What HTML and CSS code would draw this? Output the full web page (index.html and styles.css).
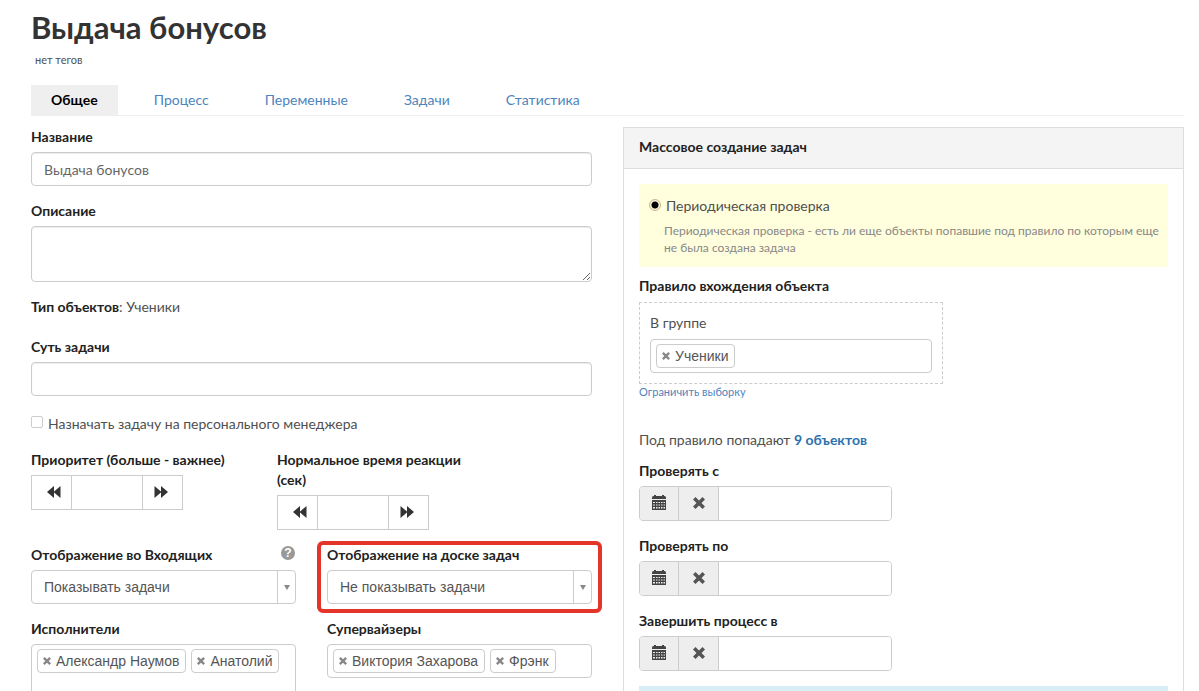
FILE: index.html
```html
<!DOCTYPE html>
<html lang="ru">
<head>
<meta charset="utf-8">
<title>Выдача бонусов</title>
<link rel="stylesheet" href="styles.css">
</head>
<body>
<svg class="sprite" aria-hidden="true">
  <symbol id="backward" viewBox="0 0 14 12"><path d="M7 0v12L0 6zM13.500 0v12L6.500 6z"/></symbol>
  <symbol id="forward" viewBox="0 0 14 12"><path d="M.5 0v12l7-6zM7 0v12l7-6z"/></symbol>
  <symbol id="calendar" viewBox="0 0 14 15"><path d="M0 4V2.500Q0 1 1.500 1H2V0h2v1h6V0h2v1h.5Q14 1 14 2.500V4z"/><path fill-rule="evenodd" d="M0 5h14v10H0zM1 7v1h2V7zm3 0v1h1.500V7zm2.500 0v1H8V7zM9 7v1h1.500V7zm2.500 0v1H13V7zM1 9.500v1h2v-1zm3 0v1h1.500v-1zm2.500 0v1H8v-1zm2.500 0v1h1.500v-1zm2.500 0v1H13v-1zM1 12v1.500h2V12zm3 0v1.500h1.500V12zm2.500 0v1.500H8V12zM9 12v1.500h1.500V12zm2.500 0v1.500H13V12z"/></symbol>
  <symbol id="remove" viewBox="0 0 12 12"><path d="M2.500 0L6 3.500 9.500 0 12 2.500 8.500 6 12 9.500 9.500 12 6 8.500 2.500 12 0 9.500 3.500 6 0 2.500z"/></symbol>
</svg>

<header class="page-head">
  <h1 class="title">Выдача бонусов</h1>
  <p class="tags-note">нет тегов</p>
  <nav class="tabs">
    <a class="tab tab-active" href="#general">Общее</a>
    <a class="tab" href="#process">Процесс</a>
    <a class="tab" href="#variables">Переменные</a>
    <a class="tab" href="#tasks">Задачи</a>
    <a class="tab" href="#stats">Статистика</a>
  </nav>
</header>

<main class="columns" id="general">
  <form class="form">
    <div class="field">
      <label class="label" for="name">Название</label>
      <input class="control" id="name" type="text" value="Выдача бонусов">
    </div>
    <div class="field">
      <label class="label" for="descr">Описание</label>
      <textarea class="control area" id="descr"></textarea>
    </div>
    <p class="object-type"><b>Тип объектов</b>: Ученики</p>
    <div class="field">
      <label class="label" for="essence">Суть задачи</label>
      <input class="control" id="essence" type="text">
    </div>
    <label class="check"><input class="checkbox" type="checkbox">Назначать задачу на персонального менеджера</label>

    <div class="spinners">
      <div class="spinner-field">
        <label class="label" for="priority">Приоритет (больше - важнее)</label>
        <div class="spinner">
          <button class="spin-btn" type="button" aria-label="Меньше"><svg class="spin-icon"><use href="#backward"/></svg></button>
          <input class="spin-input" id="priority" type="text">
          <button class="spin-btn" type="button" aria-label="Больше"><svg class="spin-icon"><use href="#forward"/></svg></button>
        </div>
      </div>
      <div class="spinner-field">
        <label class="label" for="reaction">Нормальное время реакции (сек)</label>
        <div class="spinner">
          <button class="spin-btn" type="button" aria-label="Меньше"><svg class="spin-icon"><use href="#backward"/></svg></button>
          <input class="spin-input" id="reaction" type="text">
          <button class="spin-btn" type="button" aria-label="Больше"><svg class="spin-icon"><use href="#forward"/></svg></button>
        </div>
      </div>
    </div>

    <div class="pair">
      <div class="field">
        <div class="label-row">
          <label class="label" for="inbox">Отображение во Входящих</label>
          <button class="help" type="button" aria-label="Справка">?</button>
        </div>
        <div class="select-wrap">
          <select class="control select" id="inbox"><option>Показывать задачи</option></select>
        </div>
      </div>
      <div class="field highlight">
        <label class="label" for="board">Отображение на доске задач</label>
        <div class="select-wrap">
          <select class="control select" id="board"><option>Не показывать задачи</option></select>
        </div>
      </div>
      <div class="field">
        <label class="label" for="performers">Исполнители</label>
        <div class="tokens tokens-tall">
          <span class="token"><button class="token-x" type="button" aria-label="Удалить"><svg class="token-icon"><use href="#remove"/></svg></button>Александр Наумов</span>
          <span class="token"><button class="token-x" type="button" aria-label="Удалить"><svg class="token-icon"><use href="#remove"/></svg></button>Анатолий</span>
          <input class="token-input" id="performers" type="text">
        </div>
      </div>
      <div class="field">
        <label class="label" for="supervisors">Супервайзеры</label>
        <div class="tokens">
          <span class="token"><button class="token-x" type="button" aria-label="Удалить"><svg class="token-icon"><use href="#remove"/></svg></button>Виктория Захарова</span>
          <span class="token"><button class="token-x" type="button" aria-label="Удалить"><svg class="token-icon"><use href="#remove"/></svg></button>Фрэнк</span>
          <input class="token-input" id="supervisors" type="text">
        </div>
      </div>
    </div>
  </form>

  <section class="panel">
    <h2 class="panel-title">Массовое создание задач</h2>
    <div class="panel-body">
      <div class="notice">
        <label class="radio-row"><input class="radio" type="radio" name="mode" checked>Периодическая проверка</label>
        <p class="hint">Периодическая проверка - есть ли еще объекты попавшие под правило по которым еще не была создана задача</p>
      </div>
      <h3 class="label rule-title">Правило вхождения объекта</h3>
      <div class="rule">
        <label class="rule-label" for="group">В группе</label>
        <div class="tokens">
          <span class="token"><button class="token-x" type="button" aria-label="Удалить"><svg class="token-icon"><use href="#remove"/></svg></button>Ученики</span>
          <input class="token-input" id="group" type="text">
        </div>
      </div>
      <a class="limit" href="#limit">Ограничить выборку</a>
      <p class="matches">Под правило попадают <a class="matches-link" href="#objects">9 объектов</a></p>
      <div class="field">
        <label class="label" for="from">Проверять с</label>
        <div class="date">
          <button class="date-btn" type="button" aria-label="Календарь"><svg class="cal-icon"><use href="#calendar"/></svg></button>
          <button class="date-btn" type="button" aria-label="Очистить"><svg class="x-icon"><use href="#remove"/></svg></button>
          <input class="date-input" id="from" type="text">
        </div>
      </div>
      <div class="field">
        <label class="label" for="to">Проверять по</label>
        <div class="date">
          <button class="date-btn" type="button" aria-label="Календарь"><svg class="cal-icon"><use href="#calendar"/></svg></button>
          <button class="date-btn" type="button" aria-label="Очистить"><svg class="x-icon"><use href="#remove"/></svg></button>
          <input class="date-input" id="to" type="text">
        </div>
      </div>
      <div class="field">
        <label class="label" for="finish">Завершить процесс в</label>
        <div class="date">
          <button class="date-btn" type="button" aria-label="Календарь"><svg class="cal-icon"><use href="#calendar"/></svg></button>
          <button class="date-btn" type="button" aria-label="Очистить"><svg class="x-icon"><use href="#remove"/></svg></button>
          <input class="date-input" id="finish" type="text">
        </div>
      </div>
      <div class="info"></div>
    </div>
  </section>
</main>
</body>
</html>
```
FILE: styles.css
```css
* { box-sizing: border-box; }
html { height: 100%; overflow: hidden; }
body {
  margin: 0;
  height: 100%;
  overflow: hidden;
  padding: 8px 15px 0 31px;
  background: #fff;
  color: #505050;
  font: 14px/20px "Lato", "Open Sans", sans-serif;
}
h1, h2, h3, p { margin: 0; }
a { color: #4d84bd; text-decoration: none; }
button, input, select, textarea { font: inherit; color: inherit; margin: 0; }
button { padding: 0; cursor: pointer; }
.sprite { position: absolute; width: 0; height: 0; }

.title { font-size: 31px; line-height: 38px; font-weight: 700; color: #333; }
.tags-note { font-size: 11px; line-height: 16px; margin: 6px 0 17px; padding-left: 4px; }
.tabs { display: flex; gap: 16px; border-bottom: 1px solid #eee; }
.tab { padding: 5px 20px; }
.tab-active { background: #efefef; color: #000; font-weight: 700; }

.columns { display: grid; grid-template-columns: 1fr 1fr; gap: 31px; align-items: start; margin-top: 11px; }
.field { margin-bottom: 15px; min-width: 0; }
.label { display: block; margin-bottom: 5px; font-size: 14px; line-height: 20px; font-weight: 700; color: #222; }
.control {
  display: block;
  width: 100%;
  height: 34px;
  padding: 6px 12px;
  border: 1px solid #ccc;
  border-radius: 4px;
  background: #fff;
  color: #666;
  box-shadow: inset 0 1px 1px rgba(0, 0, 0, .08);
}
.area { height: 56px; resize: vertical; }
.object-type { margin-bottom: 20px; }
.object-type b { color: #222; }
.check { display: flex; align-items: flex-start; gap: 5px; margin: 18px 0 16px; }
.checkbox {
  appearance: none;
  width: 12px;
  height: 12px;
  margin-top: 2px;
  border: 1px solid #ccc;
  border-radius: 2px;
}

.spinners { display: flex; gap: 31px; margin-bottom: 15px; }
.spinner-field { width: 215px; }
.spinner { display: flex; width: 152px; height: 35px; border: 1px solid #ccc; }
.spin-btn { width: 39px; border: 0; background: #fff; color: #333; padding-left: 4px; }
.spin-btn:last-child { padding: 0 4px 0 0; }
.spin-icon { display: block; width: 14px; height: 12px; margin: 0 auto 2px; fill: #333; }
.spin-input { flex: 1; min-width: 0; border: solid #ccc; border-width: 0 1px; border-radius: 0; background: #fff; }

.pair { display: grid; grid-template-columns: 1fr 1fr; column-gap: 31px; }
.label-row { display: flex; justify-content: space-between; align-items: flex-start; }
.help {
  width: 14px;
  height: 14px;
  margin: 1px 1px 0 0;
  border: 0;
  border-radius: 50%;
  background: #999;
  color: #fff;
  font: 700 12px/14px "Liberation Sans", sans-serif;
}
.select-wrap { position: relative; }
.select-wrap::before {
  content: "";
  position: absolute;
  inset: 1px 18px 1px auto;
  border-left: 1px solid #ccc;
}
.select-wrap::after {
  content: "";
  position: absolute;
  top: 15px;
  right: 6px;
  border: solid transparent;
  border-width: 5px 3px 0;
  border-top-color: #888;
}
.select { appearance: none; padding-right: 24px; color: #555; font-family: "Liberation Sans", sans-serif; box-shadow: none; }
.highlight { position: relative; }
.highlight::after {
  content: "";
  position: absolute;
  inset: -4px -10px -9px;
  border: 4px solid #e5352b;
  border-radius: 6px;
  pointer-events: none;
}

.tokens {
  display: flex;
  flex-wrap: wrap;
  align-content: flex-start;
  gap: 5px;
  min-height: 34px;
  padding: 4px 5px;
  border: 1px solid #ccc;
  border-radius: 4px;
  background: #fff;
}
.tokens-tall { min-height: 64px; }
.token {
  display: flex;
  align-items: center;
  gap: 5px;
  height: 24px;
  padding: 0 6px 0 5px;
  border: 1px solid #ccc;
  border-radius: 4px;
  color: #555;
  font: 14px/22px "Liberation Sans", sans-serif;
}
.token-x { border: 0; background: none; }
.token-icon { display: block; width: 8px; height: 8px; fill: #888; }
.token-input { flex: 1; width: 0; min-width: 0; height: 22px; padding: 0; border: 0; outline: 0; }

.panel { border: 1px solid #ddd; }
.panel-title { padding: 9px 15px 11px; border-bottom: 1px solid #ddd; background: #f4f4f4; color: #222; font-size: 14px; line-height: 20px; font-weight: 700; }
.panel-body { padding: 15px; }
.notice { padding: 12px 5px 11px 10px; background: #fffedd; }
.radio-row { display: flex; align-items: flex-start; gap: 5px; }
.radio {
  appearance: none;
  width: 12px;
  height: 12px;
  margin-top: 3px;
  border: 1px solid #c8b888;
  border-radius: 50%;
  background: radial-gradient(circle, #000 3px, #fff4dc 4px);
}
.hint { margin-top: 6px; padding-left: 15px; color: #888; font-size: 12px; line-height: 17px; }
.rule-title { margin: 9px 0 6px; }
.rule { width: 304px; max-width: 100%; padding: 10px; border: 1px dashed #ccc; }
.rule-label { display: block; margin-bottom: 6px; }
.limit { display: block; font-size: 11px; line-height: 16px; }
.matches { margin: 30px 0 11px; }
.matches-link { color: #2c71ad; font-weight: 700; }
.date { display: flex; width: 253px; max-width: 100%; height: 35px; border: 1px solid #ccc; border-radius: 4px; overflow: hidden; }
.date-btn { width: 40px; border: 0; border-right: 1px solid #ccc; background: #eee; }
.date-btn:first-child { width: 39px; }
.cal-icon { display: block; width: 14px; height: 15px; margin: 0 auto 2px; fill: #444; }
.x-icon { display: block; width: 12px; height: 12px; margin: 0 auto 2px; fill: #555; }
.date-input { flex: 1; min-width: 0; border: 0; background: #fff; }
.info { height: 50px; background: #d9edf7; }
```
